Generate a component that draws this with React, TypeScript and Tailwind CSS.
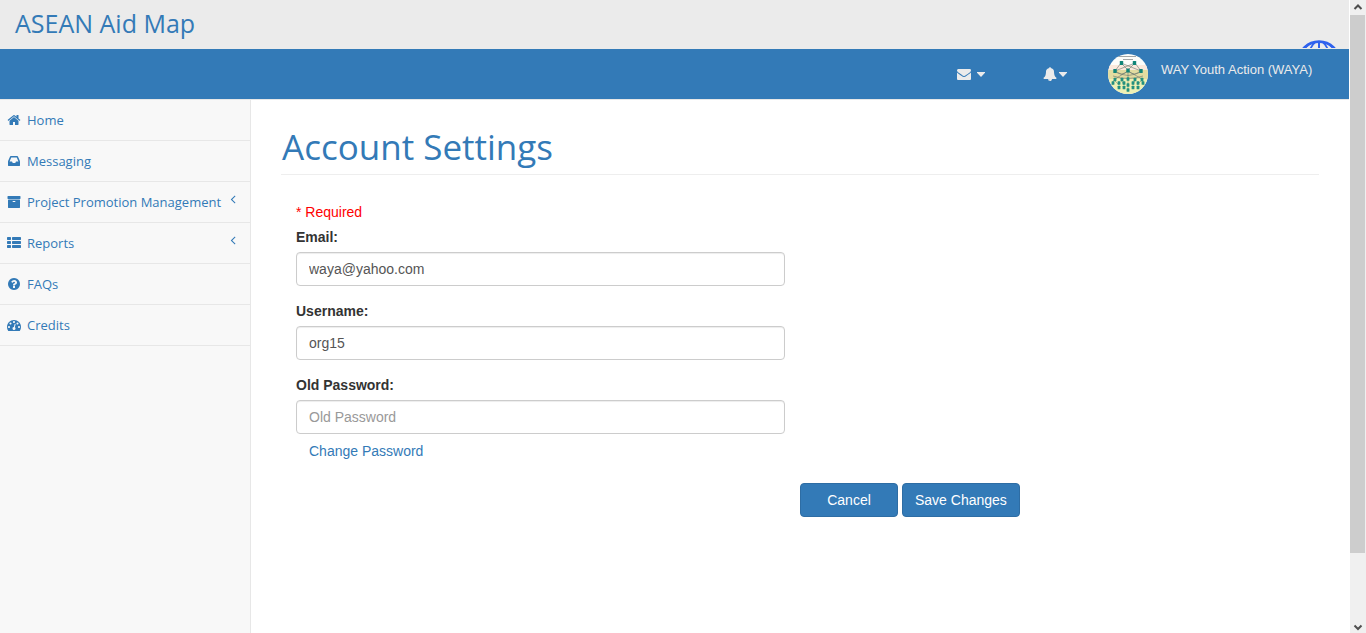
import type { ReactNode } from "react";

const ICONS = {
  home: "M1472 992v480q0 26-19 45t-45 19h-384v-384h-256v384h-384q-26 0-45-19t-19-45v-480q0-1 .5-3t.5-3l575-474 575 474q1 2 1 6zm223-69l-62 74q-8 9-21 11h-3q-13 0-21-7l-692-577-692 577q-12 8-24 7-13-2-21-11l-62-74q-8-10-7-23.5t11-21.5l719-599q32-26 76-26t76 26l244 204v-195q0-14 9-23t23-9h192q14 0 23 9t9 23v408l219 182q10 8 11 21.5t-7 23.5z",
  inbox: "M1151 960h316q-1-3-2.5-8t-2.5-8l-212-496h-708l-212 496q-1 2-2.5 8t-2.5 8h316l95 192h320zm513 30v482q0 26-19 45t-45 19h-1408q-26 0-45-19t-19-45v-482q0-62 25-123l238-552q10-25 36.5-42t52.5-17h832q26 0 52.5 17t36.5 42l238 552q25 61 25 123z",
  archive: "M1088 832q0-26-19-45t-45-19h-256q-26 0-45 19t-19 45 19 45 45 19h256q26 0 45-19t19-45zm576-192v960q0 26-19 45t-45 19h-1408q-26 0-45-19t-19-45v-960q0-26 19-45t45-19h1408q26 0 45 19t19 45zm64-448v256q0 26-19 45t-45 19h-1536q-26 0-45-19t-19-45v-256q0-26 19-45t45-19h1536q26 0 45 19t19 45z",
  list: "M512 1248v192q0 40-28 68t-68 28h-320q-40 0-68-28t-28-68v-192q0-40 28-68t68-28h320q40 0 68 28t28 68zm0-512v192q0 40-28 68t-68 28h-320q-40 0-68-28t-28-68v-192q0-40 28-68t68-28h320q40 0 68 28t28 68zm1280 512v192q0 40-28 68t-68 28h-960q-40 0-68-28t-28-68v-192q0-40 28-68t68-28h960q40 0 68 28t28 68zm-1280-1024v192q0 40-28 68t-68 28h-320q-40 0-68-28t-28-68v-192q0-40 28-68t68-28h320q40 0 68 28t28 68zm1280 512v192q0 40-28 68t-68 28h-960q-40 0-68-28t-28-68v-192q0-40 28-68t68-28h960q40 0 68 28t28 68zm0-512v192q0 40-28 68t-68 28h-960q-40 0-68-28t-28-68v-192q0-40 28-68t68-28h960q40 0 68 28t28 68z",
  question: "M1024 1376v-192q0-14-9-23t-23-9h-192q-14 0-23 9t-9 23v192q0 14 9 23t23 9h192q14 0 23-9t9-23zm256-672q0-88-55.5-163t-138.5-116-170-41q-243 0-371 213-15 24 8 42l132 100q7 6 19 6 16 0 25-12 53-68 86-92 34-24 86-24 48 0 85.5 26t37.5 59q0 38-20 61t-68 45q-63 28-115.5 86.5t-52.5 125.5v36q0 14 9 23t23 9h192q14 0 23-9t9-23q0-19 21.5-49.5t54.5-49.5q32-18 49-28.5t46-35 44.5-48 28-60.5 12.5-81zm384 192q0 209-103 385.5t-279.5 279.5-385.5 103-385.5-103-279.5-279.5-103-385.5 103-385.5 279.5-279.5 385.5-103 385.5 103 279.5 279.5 103 385.5z",
  gauge: "M384 1152q0-53-37.5-90.5t-90.5-37.5-90.5 37.5-37.5 90.5 37.5 90.5 90.5 37.5 90.5-37.5 37.5-90.5zm192-448q0-53-37.5-90.5t-90.5-37.5-90.5 37.5-37.5 90.5 37.5 90.5 90.5 37.5 90.5-37.5 37.5-90.5zm428 481l101-382q6-26-7.5-48.5t-38.5-29.5-48 6.5-30 39.5l-101 382q-60 5-107 43.5t-63 98.5q-20 77 20 146t117 89 146-20 89-117q16-60-6-117t-72-91zm660-33q0-53-37.5-90.5t-90.5-37.5-90.5 37.5-37.5 90.5 37.5 90.5 90.5 37.5 90.5-37.5 37.5-90.5zm-640-640q0-53-37.5-90.5t-90.5-37.5-90.5 37.5-37.5 90.5 37.5 90.5 90.5 37.5 90.5-37.5 37.5-90.5zm448 192q0-53-37.5-90.5t-90.5-37.5-90.5 37.5-37.5 90.5 37.5 90.5 90.5 37.5 90.5-37.5 37.5-90.5zm320 448q0 261-141 483-19 29-54 29h-1402q-35 0-54-29-141-221-141-483 0-182 71-348t191-286 286-191 348-71 348 71 286 191 191 286 71 348z",
  envelope: "M1792 710v794q0 66-47 113t-113 47h-1472q-66 0-113-47t-47-113v-794q44 49 101 87 362 246 497 345 57 42 92.5 65.5t94.5 48 110 24.5h2q51 0 110-24.5t94.5-48 92.5-65.5q170-123 498-345 57-39 100-87zm0-294q0 79-49 151t-122 123q-376 261-468 325-10 7-42.5 31t-54 38.5-52 32.5-57.5 27-50 9h-2q-23 0-50-9t-57.5-27-52-32.5-54-38.5-42.5-31q-91-64-262-182.5t-205-142.5q-62-42-117-115.5t-55-136.5q0-78 41.5-130t118.5-52h1472q65 0 112.5 47t47.5 113z",
  bell: "M912 1696q0-16-16-16-59 0-101.5-42.5t-42.5-101.5q0-16-16-16t-16 16q0 73 51.5 124.5t124.5 51.5q16 0 16-16zm816-288q0 52-38 90t-90 38h-448q0 106-75 181t-181 75-181-75-75-181h-448q-52 0-90-38t-38-90q50-42 91-88t85-119.5 74.5-158.5 50-206 19.5-260q0-152 117-282.5t307-158.5q-8-19-8-39 0-40 28-68t68-28 68 28 28 68q0 20-8 39 190 28 307 158.5t117 282.5q0 139 19.5 260t50 206 74.5 158.5 85 119.5 91 88z",
  angleLeft: "M1203 544q0 13-10 23l-393 393 393 393q10 10 10 23t-10 23l-50 50q-10 10-23 10t-23-10l-466-466q-10-10-10-23t10-23l466-466q10-10 23-10t23 10l50 50q10 10 10 23z",
};

type IconName = keyof typeof ICONS;

function Icon({ name, className = "size-3.5" }: { name: IconName; className?: string }) {
  return (
    <svg viewBox="0 0 1792 1792" fill="currentColor" aria-hidden="true" className={`shrink-0 ${className}`}>
      <path d={ICONS[name]} />
    </svg>
  );
}

function CaretDown() {
  return (
    <svg viewBox="0 0 8 5" fill="currentColor" aria-hidden="true" className="h-[5px] w-2 shrink-0">
      <path d="M0 0h8v.8L4 5 0 .8z" />
    </svg>
  );
}

function Globe() {
  return (
    <svg viewBox="0 0 44 44" fill="none" stroke="#2f62ee" aria-hidden="true" className="size-11">
      <circle cx="22" cy="22" r="20.4" strokeWidth="2.8" />
      <path d="M22 1v42M1 22h42M5 34.5q17-6 34 0" strokeWidth="2" />
      <path d="M18.5 2Q15 4.500 13 10M25.500 2Q29 4.500 31 10M12 4Q9 6 7 10M32 4Q35 6 37 10" strokeWidth="1.800" />
    </svg>
  );
}

const TOP_NODES = [[13.5, 9], [26.5, 9]];
const MID_NODES = [[7, 17], [20, 16.5], [33, 17]];
const LOW_NODES = [[7, 25.5], [14, 25.5], [20, 25], [27, 25.5], [34, 25.5]];
const LEAF_NODES = [[5, 29], [11, 29], [16, 29], [25, 29], [30, 29], [35, 29], [11, 33.5], [16, 33.5], [20, 36], [25, 33.5], [30, 33.5], [20, 31]];

function Avatar() {
  return (
    <svg viewBox="0 0 40 40" aria-hidden="true" className="size-10 shrink-0 rounded-full">
      <rect width="40" height="40" fill="#fdfdfa" />
      <rect y="11" width="40" height="5" fill="#fbe9dc" />
      <rect y="16" width="40" height="9" fill="#e2dca0" />
      <rect y="25" width="40" height="15" fill="#eef0b4" />
      <path d="M9 2.5h19M15 5.5h10" stroke="#8b8f90" strokeWidth=".8" />
      <path d="M13 9L7 17M13 9l7 7M13 9l20 8M27 9L7 17M27 9l-7 7M27 9l6 8M7 17q13 9 26 0M7 17q6 6 13 0q7 6 13 0M20 16v9M5 22q15 5 30 0M20 17L7 25M20 17l14 8" stroke="#6a766f" strokeWidth=".6" fill="none" />
      <path d="M6 26l-2 5M6 26l5 5M20 25v11M34 26l-5 5M34 26l2 5M13 26l3 5M27 26l-2 5" stroke="#7b8463" strokeWidth=".5" />
      {[...TOP_NODES, ...MID_NODES].map(([x, y]) => (
        <rect key={`${x}-${y}`} x={x - 1.7} y={y - 2.1} width="3.4" height="4.2" rx=".6" fill="#118577" />
      ))}
      {[...LOW_NODES, ...LEAF_NODES].map(([x, y]) => (
        <rect key={`${x}-${y}`} x={x - 1.4} y={y - 1.8} width="2.8" height="3.6" rx=".5" fill="#23907f" />
      ))}
    </svg>
  );
}

const NAV: { label: string; icon: IconName; expandable?: boolean }[] = [
  { label: "Home", icon: "home" },
  { label: "Messaging", icon: "inbox" },
  { label: "Project Promotion Management", icon: "archive", expandable: true },
  { label: "Reports", icon: "list", expandable: true },
  { label: "FAQs", icon: "question" },
  { label: "Credits", icon: "gauge" },
];

function Sidebar() {
  return (
    <nav className="w-[251px] shrink-0 border-r border-[#e7e7e7] bg-[#f8f8f8] font-['Open_Sans',sans-serif]">
      <ul>
        {NAV.map((item) => (
          <li key={item.label} className="border-b border-[#e7e7e7]">
            <a href="#" className="flex h-10 items-center pr-2.5 pl-[7px] text-[13px] whitespace-nowrap text-[#337ab7]">
              <Icon name={item.icon} />
              <span className="ml-1.5 grow">{item.label}</span>
              {item.expandable && <Icon name="angleLeft" className="-ml-4 mb-1.5 size-3.5" />}
            </a>
          </li>
        ))}
      </ul>
    </nav>
  );
}

function Field({ id, label, children }: { id: string; label: string; children: ReactNode }) {
  return (
    <div className="mb-[15px]">
      <label htmlFor={id} className="mb-[5px] block font-bold">{label}</label>
      {children}
    </div>
  );
}

const INPUT =
  "block h-[34px] w-full rounded border border-[#ccc] bg-white px-3 text-sm text-[#555] shadow-[inset_0_1px_1px_rgba(0,0,0,0.075)] placeholder:text-[#999] focus:border-[#66afe9] focus:outline-none";
const BUTTON = "h-[34px] rounded border border-[#2e6da4] bg-[#337ab7] px-3 text-white";

function AccountForm() {
  return (
    <form className="px-[15px] pt-[27px]" onSubmit={(event) => event.preventDefault()}>
      <div className="w-[48.5%]">
        <p className="mb-[5px] text-[#f00]">* Required</p>
        <Field id="email" label="Email:">
          <input id="email" type="email" defaultValue="waya@yahoo.com" className={INPUT} />
        </Field>
        <Field id="username" label="Username:">
          <input id="username" type="text" defaultValue="org15" className={INPUT} />
        </Field>
        <Field id="old-password" label="Old Password:">
          <input id="old-password" type="password" placeholder="Old Password" className={INPUT} />
          <a href="#" className="mt-[7px] ml-[13px] inline-block text-[#337ab7]">Change Password</a>
        </Field>
      </div>
      <div className="mt-[22px] ml-[50%] flex gap-1">
        <button type="button" className={`${BUTTON} w-[98px]`}>Cancel</button>
        <button type="submit" className={BUTTON}>Save Changes</button>
      </div>
    </form>
  );
}

function ScrollArrow({ down = false }: { down?: boolean }) {
  return (
    <svg viewBox="0 0 16 15" fill="none" stroke="#505050" strokeWidth="2" aria-hidden="true" className="h-[15px] w-4 shrink-0">
      <path d={down ? "M4.5 7.5l3.5 3.5L11.5 7.5" : "M4.5 9L8 5.5 11.5 9"} />
    </svg>
  );
}

function ScrollTrack() {
  return (
    <div aria-hidden="true" className="sticky top-0 flex h-screen w-[17px] shrink-0 flex-col border-l border-white bg-[#f0f0f0]">
      <ScrollArrow />
      <div className="grow">
        <div className="mr-px h-[89.2%] bg-[#cdcdcd]" />
      </div>
      <ScrollArrow down />
    </div>
  );
}

export default function App() {
  return (
    <div className="flex min-h-screen bg-white font-['Liberation_Sans',Arial,sans-serif] text-sm leading-5 text-[#333]">
      <div className="flex min-w-0 grow flex-col">
        <header className="relative flex h-[49px] items-center overflow-hidden bg-[#ebebeb] px-[15px] pb-1">
          <a href="#" className="font-['Open_Sans',sans-serif] text-[25px] leading-9 text-[#337ab7]">ASEAN Aid Map</a>
          <div className="absolute top-10 right-2 h-2 w-11 overflow-hidden">
            <Globe />
          </div>
        </header>
        <div className="flex h-[50px] items-center justify-end bg-[#337ab7] pr-[30px] text-[#ebebeb]">
          <button type="button" aria-label="Messages" className="mr-[58px] flex items-center gap-1.5">
            <Icon name="envelope" />
            <CaretDown />
          </button>
          <button type="button" aria-label="Notifications" className="mr-[41px] flex items-center gap-0.5">
            <Icon name="bell" />
            <CaretDown />
          </button>
          <a href="#" className="flex items-center gap-[13px] text-[13px]">
            <Avatar />
            <span className="mb-2 min-w-[158px]">WAY Youth Action (WAYA)</span>
          </a>
        </div>
        <div className="flex grow border-t border-[#e7e7e7]">
          <Sidebar />
          <main className="min-w-0 grow px-[30px]">
            <h1 className="mt-[26px] border-b border-[#eee] pb-1.5 pl-px font-['Open_Sans',sans-serif] text-[35px] leading-[42px] text-[#337ab7]">
              Account Settings
            </h1>
            <AccountForm />
          </main>
        </div>
      </div>
      <ScrollTrack />
    </div>
  );
}
